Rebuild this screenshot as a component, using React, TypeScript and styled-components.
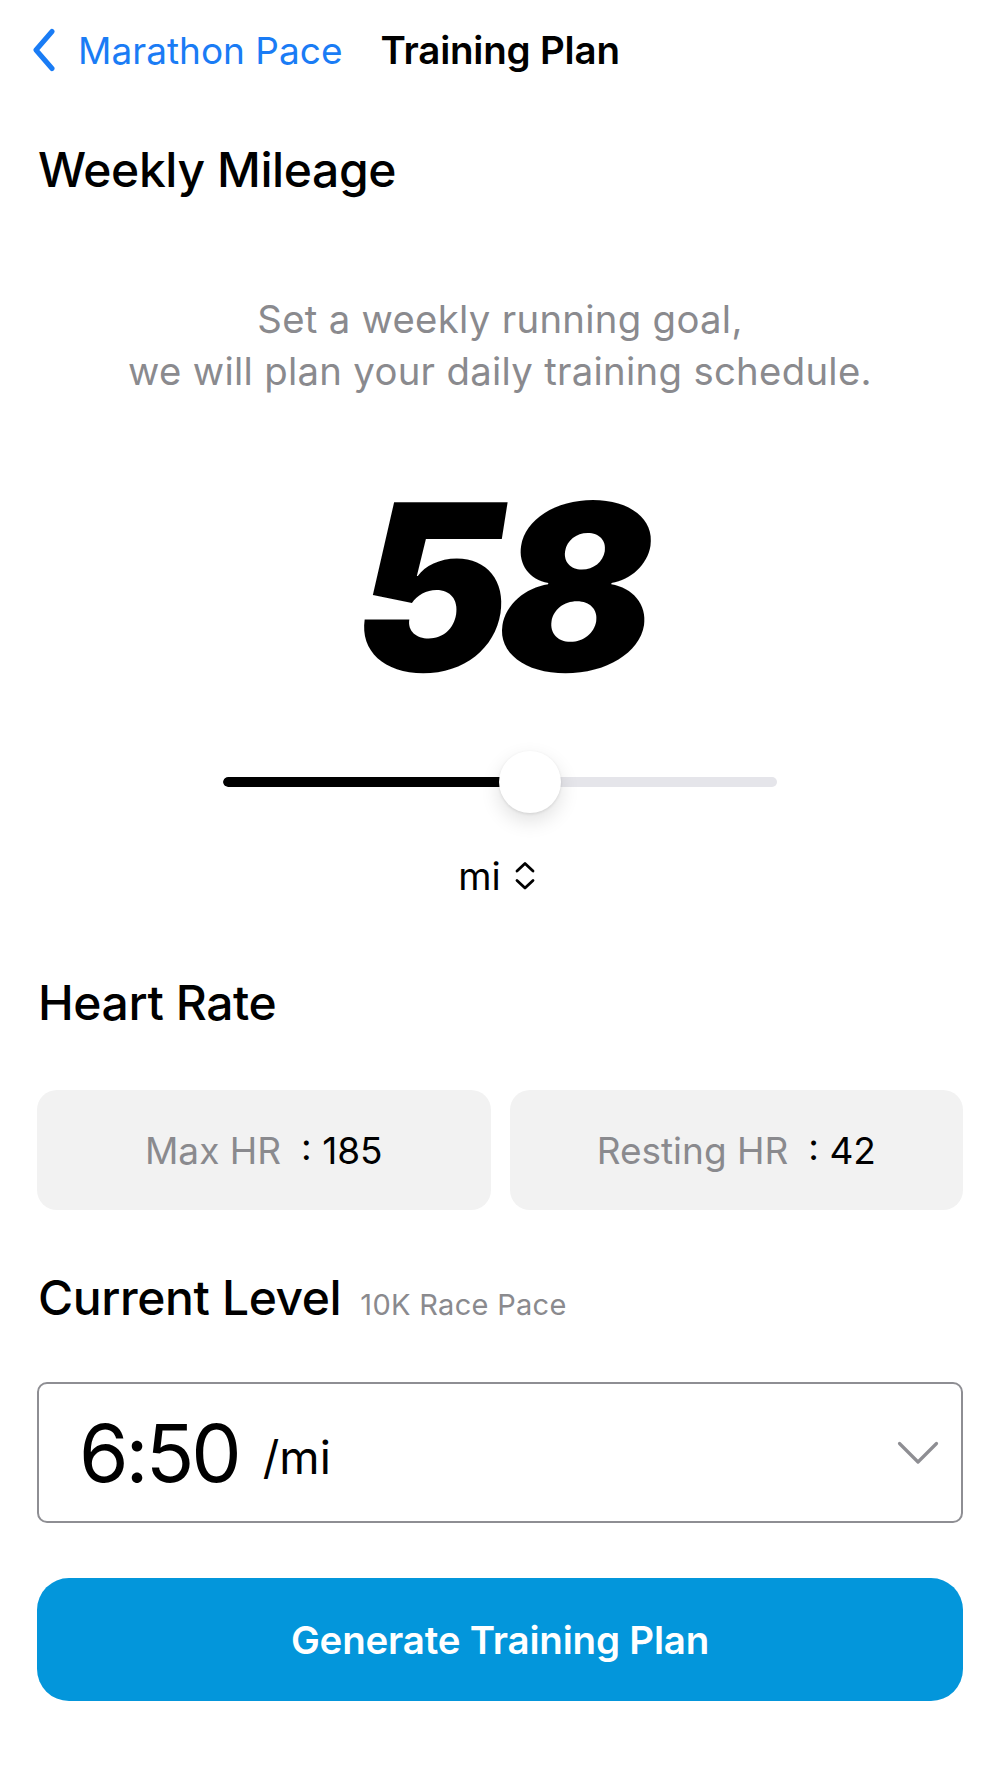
import React from "react";
import styled, { createGlobalStyle } from "styled-components";

const Global = createGlobalStyle`
  html, body { margin: 0; padding: 0; background: #ffffff; }
  body { font-family: Inter, "Noto Sans", "Liberation Sans", sans-serif; color: #000; }
  * { box-sizing: border-box; }
`;

const Page = styled.div`
  width: 1000px;
  min-height: 1778px;
  display: flex;
  flex-direction: column;
  background: #fff;
`;

const NavBar = styled.nav`
  height: 100px;
  display: flex;
  align-items: center;
  padding-left: 32px;
`;

const BackButton = styled.button`
  display: flex;
  align-items: center;
  gap: 22px;
  background: none;
  border: none;
  padding: 0;
  color: #1a7cf5;
  font-family: inherit;
  font-size: 37px;
  font-weight: 400;
  cursor: pointer;
`;

const NavTitle = styled.h1`
  margin: 0 0 0 38px;
  font-size: 38.5px;
  font-weight: 600;
  letter-spacing: -0.2px;
`;

const Content = styled.main`
  display: flex;
  flex-direction: column;
  padding: 0 37px;
`;

const SectionTitle = styled.h2<{ $top: number }>`
  margin: ${(p) => p.$top}px 0 0 1px;
  font-size: 48px;
  line-height: 56px;
  font-weight: 500;
  letter-spacing: -0.4px;
  display: flex;
  align-items: baseline;
  gap: 19px;
`;

const Hint = styled.span`
  font-size: 29px;
  font-weight: 400;
  color: #8a8a8e;
  letter-spacing: 0.3px;
`;

const Subtitle = styled.p`
  margin: 95px 0 0;
  text-align: center;
  font-size: 38.3px;
  line-height: 52px;
  color: #8a8a8e;
  letter-spacing: 0.3px;
`;

const BigNumber = styled.div`
  margin-top: 70px;
  display: flex;
  justify-content: center;
`;

const BigDigits = styled.span`
  display: inline-block;
  font-size: 232px;
  line-height: 240px;
  font-weight: 900;
  letter-spacing: -12px;
  transform: skewX(-9deg);
  padding-left: 4px;
`;

const SliderWrap = styled.div`
  margin: 44px auto 0;
  width: 554px;
  height: 62px;
  position: relative;
  display: flex;
  align-items: center;
`;

const Track = styled.div`
  width: 100%;
  height: 10px;
  border-radius: 5px;
  background: #e5e5ea;
  overflow: hidden;
`;

const TrackFill = styled.div`
  height: 100%;
  background: #000;
  border-radius: 5px;
`;

const Thumb = styled.div`
  position: absolute;
  top: 0;
  width: 62px;
  height: 62px;
  margin-left: -31px;
  border-radius: 50%;
  background: #fff;
  box-shadow: 0 8px 20px rgba(0, 0, 0, 0.12), 0 1px 3px rgba(0, 0, 0, 0.1);
`;

const UnitPicker = styled.div`
  margin: 43px auto 0;
  display: flex;
  align-items: center;
  gap: 13px;
  font-size: 38px;
  line-height: 40px;
  padding-right: 6px;
`;

const CardRow = styled.div`
  margin-top: 59px;
  display: grid;
  grid-template-columns: 1fr 1fr;
  gap: 19px;
`;

const Card = styled.div`
  height: 120px;
  border-radius: 20px;
  background: #f2f2f2;
  display: flex;
  align-items: center;
  justify-content: center;
  font-size: 37px;
`;

const CardLabel = styled.span`
  color: #8a8a8e;
  margin-right: 20px;
`;

const CardValue = styled.span`
  color: #000;
`;

const Select = styled.div`
  margin-top: 49px;
  height: 141px;
  border: 2px solid #8e8e93;
  border-radius: 10px;
  display: flex;
  align-items: center;
  justify-content: space-between;
  padding: 0 22px 0 40px;
`;

const PaceValue = styled.div`
  white-space: nowrap;
`;

const PaceNumber = styled.span`
  font-size: 80px;
  font-weight: 400;
  letter-spacing: -3px;
  margin-right: 24px;
`;

const PaceUnit = styled.span`
  font-size: 46px;
  vertical-align: 8px;
`;

const PrimaryButton = styled.button`
  margin-top: 55px;
  height: 123px;
  border: none;
  border-radius: 32px;
  background: #0396db;
  color: #fff;
  font-family: inherit;
  font-size: 38.5px;
  font-weight: 600;
  letter-spacing: -0.2px;
  cursor: pointer;
`;

const BackChevron = () => (
  <svg width="24" height="44" viewBox="0 0 24 44" fill="none">
    <path d="M20 3.5 L4 22 L20 40.5" stroke="#1a7cf5" strokeWidth="5" strokeLinecap="round" strokeLinejoin="round" />
  </svg>
);

const UpDown = () => (
  <svg width="22" height="30" viewBox="0 0 22 30" fill="none">
    <path d="M3 10 L11 2.5 L19 10" stroke="#000" strokeWidth="2.8" strokeLinecap="round" strokeLinejoin="round" />
    <path d="M3 19.5 L11 27 L19 19.5" stroke="#000" strokeWidth="2.8" strokeLinecap="round" strokeLinejoin="round" />
  </svg>
);

const DownChevron = () => (
  <svg width="42" height="24" viewBox="0 0 42 24" fill="none">
    <path d="M2.5 2.5 L21 21 L39.5 2.5" stroke="#8e8e93" strokeWidth="3.2" strokeLinecap="round" strokeLinejoin="round" />
  </svg>
);

export default function App() {
  const pct = 55.4;
  return (
    <Page>
      <Global />
      <NavBar>
        <BackButton>
          <BackChevron />
          Marathon Pace
        </BackButton>
        <NavTitle>Training Plan</NavTitle>
      </NavBar>
      <Content>
        <SectionTitle $top={42}>Weekly Mileage</SectionTitle>
        <Subtitle>
          Set a weekly running goal,
          <br />
          we will plan your daily training schedule.
        </Subtitle>
        <BigNumber>
          <BigDigits>58</BigDigits>
        </BigNumber>
        <SliderWrap>
          <Track>
            <TrackFill style={{ width: `${pct}%` }} />
          </Track>
          <Thumb style={{ left: `${pct}%` }} />
        </SliderWrap>
        <UnitPicker>
          mi
          <UpDown />
        </UnitPicker>
        <SectionTitle $top={79}>Heart Rate</SectionTitle>
        <CardRow>
          <Card>
            <CardLabel>Max HR</CardLabel>
            <CardValue>: 185</CardValue>
          </Card>
          <Card>
            <CardLabel>Resting HR</CardLabel>
            <CardValue>: 42</CardValue>
          </Card>
        </CardRow>
        <SectionTitle $top={60}>
          Current Level <Hint>10K Race Pace</Hint>
        </SectionTitle>
        <Select>
          <PaceValue>
            <PaceNumber>6:50</PaceNumber>
            <PaceUnit>/mi</PaceUnit>
          </PaceValue>
          <DownChevron />
        </Select>
        <PrimaryButton>Generate Training Plan</PrimaryButton>
      </Content>
    </Page>
  );
}
